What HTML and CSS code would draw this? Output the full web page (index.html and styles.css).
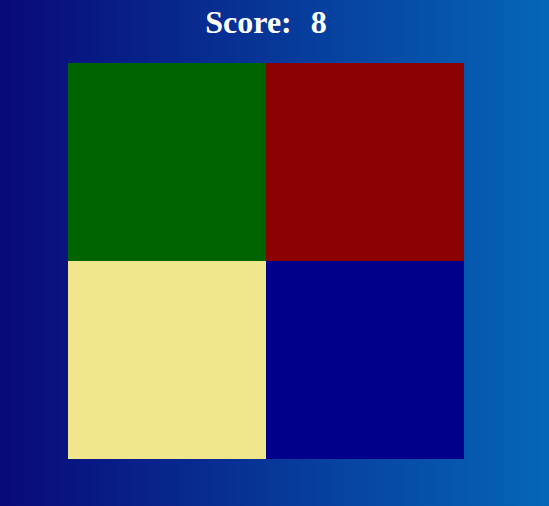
FILE: index.html
```html
<!DOCTYPE html>
<html>
<head>
<meta charset="UTF-8">
<title>Simon</title>
<link rel="stylesheet" href="styles.css">
</head>
<body>
    <div class="game">
        <h1 class="score">Score:&nbsp; <span id="score" class="value">8</span></h1>
        <div class="board">
            <div class="pad green"></div>
            <div class="pad red"></div>
            <div class="pad yellow"></div>
            <div class="pad blue"></div>
        </div>
    </div>
</body>
</html>
```

FILE: styles.css
```css
html, body {
    height: 100%;
}
body {
    margin: 0;
    background: linear-gradient(to right, #090979, #0566b8);
    font-family: "Liberation Serif", "Times New Roman", serif;
}
.game {
    width: 396px;
    margin-left: 68px;
    padding-top: 4px;
}
.score {
    margin: 0 0 22px 0;
    font-size: 32px;
    font-weight: bold;
    color: white;
    text-align: center;
    line-height: 37px;
}
.value {
    margin-left: 3px;
}
.board {
    display: grid;
    grid-template-columns: 198px 198px;
    grid-template-rows: 198px 198px;
}
.green {
    background: #006400;
}
.red {
    background: #8b0000;
}
.yellow {
    background: #f0e68c;
}
.blue {
    background: #00008b;
}
```
